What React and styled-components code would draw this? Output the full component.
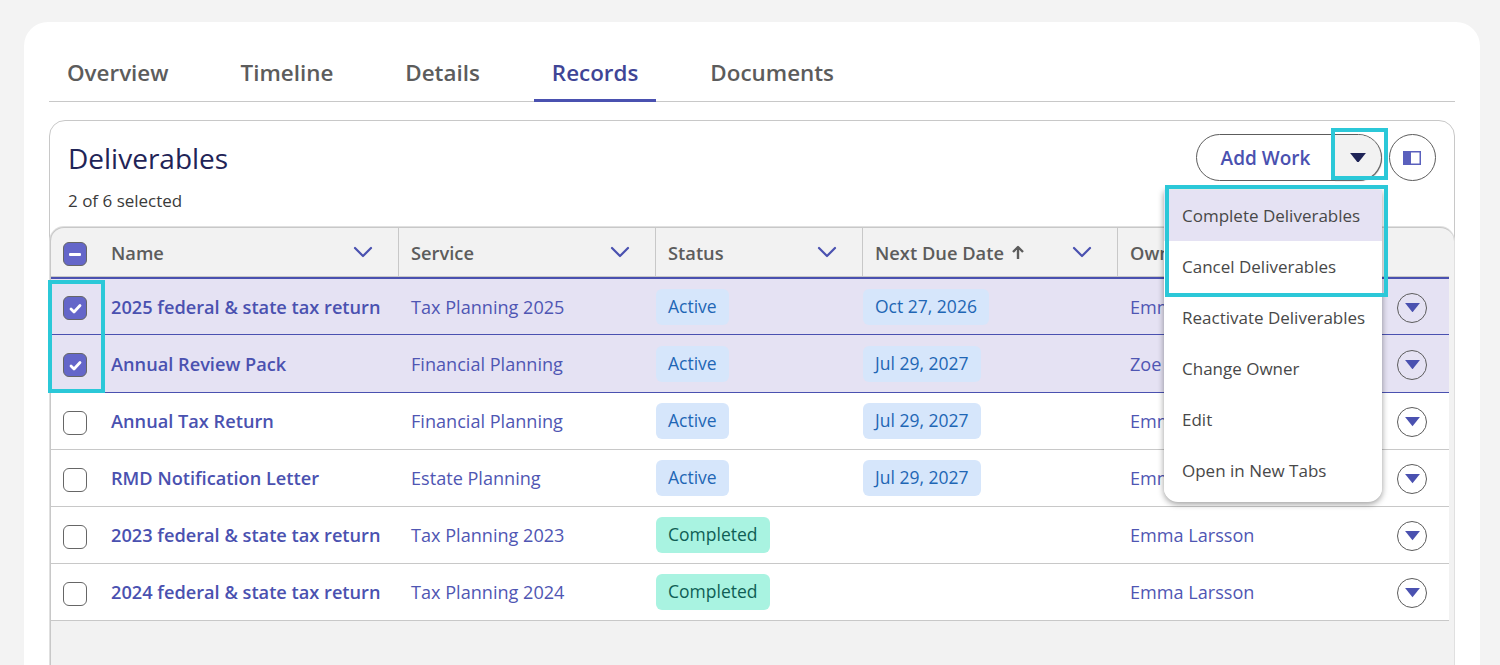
import React from 'react';
import styled, {createGlobalStyle} from 'styled-components';

const GlobalStyle = createGlobalStyle`
  html, body {
    margin: 0;
    padding: 0;
    background: #f3f3f3;
    font-family: "Open Sans", "Noto Sans", sans-serif;
  }
  * { box-sizing: border-box; }
`;

const COLUMNS = '48px 299px 257px 207px 255px 1fr 64px';

const rows = [
    {name: '2025 federal & state tax return', service: 'Tax Planning 2025', status: 'Active', date: 'Oct 27, 2026', owner: 'Emma Larsson', selected: true},
    {name: 'Annual Review Pack', service: 'Financial Planning', status: 'Active', date: 'Jul 29, 2027', owner: 'Zoe Larsson', selected: true},
    {name: 'Annual Tax Return', service: 'Financial Planning', status: 'Active', date: 'Jul 29, 2027', owner: 'Emma Larsson'},
    {name: 'RMD Notification Letter', service: 'Estate Planning', status: 'Active', date: 'Jul 29, 2027', owner: 'Emma Larsson'},
    {name: '2023 federal & state tax return', service: 'Tax Planning 2023', status: 'Completed', owner: 'Emma Larsson'},
    {name: '2024 federal & state tax return', service: 'Tax Planning 2024', status: 'Completed', owner: 'Emma Larsson'},
];

const menuItems = ['Complete Deliverables', 'Cancel Deliverables', 'Reactivate Deliverables', 'Change Owner', 'Edit', 'Open in New Tabs'];
const tabs = ['Overview', 'Timeline', 'Details', 'Records', 'Documents'];

const Chevron = () => (
    <svg width="20" height="12" viewBox="0 0 20 12" fill="none">
        <path d="M2 2l8 8 8-8" stroke="#4a51b0" strokeWidth="2.2" strokeLinecap="round" strokeLinejoin="round"/>
    </svg>
);

const Caret = ({size = 16, color = '#4a51b0'}) => (
    <svg width={size} height={size * 0.62} viewBox="0 0 16 10">
        <path d="M0 0h16L8 10z" fill={color}/>
    </svg>
);

const Check = () => (
    <svg width="13" height="11" viewBox="0 0 13 11" fill="none">
        <path d="M2 6l3 3 6-6.5" stroke="#fff" strokeWidth="2.8" strokeLinecap="round" strokeLinejoin="round"/>
    </svg>
);

const SortArrow = () => (
    <svg width="14" height="15" viewBox="0 0 14 15" fill="none">
        <path d="M7 14V2M2 7l5-5 5 5" stroke="#5c5c5c" strokeWidth="2.4" strokeLinejoin="round"/>
    </svg>
);

const App = () => {
    return (
        <Page>
            <GlobalStyle/>
            <Card>
                <TabBar>
                    {tabs.map(tab => <Tab key={tab} $active={tab === 'Records'}>{tab}</Tab>)}
                </TabBar>
                <Panel>
                    <PanelHeader>
                        <div>
                            <Title>Deliverables</Title>
                            <Selected>2 of 6 selected</Selected>
                        </div>
                        <Actions>
                            <SplitButton>
                                <AddWork>Add Work</AddWork>
                                <SplitCaret><Caret size={16} color="#1f2457"/></SplitCaret>
                                <Menu>
                                    {menuItems.map((item, i) => <MenuItem key={item} $hover={i === 0}>{item}</MenuItem>)}
                                </Menu>
                            </SplitButton>
                            <RoundButton>
                                <PanelIcon width="18" height="14" viewBox="0 0 18 14">
                                    <rect x="0.75" y="0.75" width="16.5" height="12.5" fill="none" stroke="#5a60bd" strokeWidth="1.5"/>
                                    <rect x="1" y="1" width="7" height="12" fill="#5a60bd"/>
                                </PanelIcon>
                            </RoundButton>
                        </Actions>
                    </PanelHeader>
                    <Table>
                        <HeaderRow>
                            <CheckCell><Box $checked><Dash/></Box></CheckCell>
                            <HeaderCell $first>Name<Chevron/></HeaderCell>
                            <HeaderCell>Service<Chevron/></HeaderCell>
                            <HeaderCell>Status<Chevron/></HeaderCell>
                            <HeaderCell>
                                <SortLabel>Next Due Date <SortArrow/></SortLabel>
                                <Chevron/>
                            </HeaderCell>
                            <HeaderCell>Owner</HeaderCell>
                            <div/>
                        </HeaderRow>
                        {rows.map(row => (
                            <Row key={row.name} $selected={row.selected}>
                                <CheckCell>
                                    <Box $checked={row.selected}>{row.selected && <Check/>}</Box>
                                </CheckCell>
                                <NameLink>{row.name}</NameLink>
                                <TextLink>{row.service}</TextLink>
                                <PillCell>
                                    <Pill $done={row.status === 'Completed'}>{row.status}</Pill>
                                </PillCell>
                                <PillCell>
                                    {row.date && <Pill>{row.date}</Pill>}
                                </PillCell>
                                <TextLink>{row.owner}</TextLink>
                                <ActionCell>
                                    <RowAction><Caret size={15}/></RowAction>
                                </ActionCell>
                            </Row>
                        ))}
                    </Table>
                </Panel>
            </Card>
            <Highlight $x={1331} $y={128} $w={57} $h={52}/>
            <Highlight $x={1165} $y={185} $w={223} $h={112}/>
            <Highlight $x={48} $y={280} $w={57} $h={113}/>
        </Page>
    );
};

const Page = styled.div`
  position: relative;
  height: 665px;
  overflow: hidden;
  padding: 22px 20px 0 24px;
`;

const Card = styled.div`
  background: #fff;
  border-radius: 24px 24px 0 0;
  height: 700px;
  padding: 0 25px;
`;

const TabBar = styled.div`
  display: flex;
  gap: 36px;
  height: 80px;
  border-bottom: 1px solid #c8c8c8;
  align-items: flex-end;
`;

const Tab = styled.div`
  padding: 0 18px;
  height: 47px;
  line-height: 36px;
  font-size: 22.4px;
  font-weight: 600;
  color: ${p => p.$active ? '#3f4596' : '#5c5c5c'};
  border-bottom: 3px solid ${p => p.$active ? '#4a51b0' : 'transparent'};
  margin-bottom: -1px;
`;

const Panel = styled.div`
  margin-top: 18px;
  border: 1px solid #c8c8c8;
  border-radius: 16px 16px 0 0;
  height: 600px;
  display: flex;
  flex-direction: column;
`;

const PanelHeader = styled.div`
  display: flex;
  justify-content: space-between;
  height: 106px;
  padding: 13px 18px 0 18px;
`;

const Title = styled.div`
  font-size: 28px;
  line-height: 48px;
  color: #1f2457;
`;

const Selected = styled.div`
  font-size: 17px;
  line-height: 24px;
  margin-top: 7px;
  color: #3a3a3a;
`;

const Actions = styled.div`
  display: flex;
  gap: 7px;
  height: 47px;
`;

const SplitButton = styled.div`
  position: relative;
  display: flex;
  width: 186px;
  height: 47px;
  border: 1px solid #5c5c5c;
  border-radius: 24px;
  background: #fff;
`;

const AddWork = styled.div`
  flex: 1;
  text-align: center;
  font-size: 19px;
  font-weight: 600;
  line-height: 47px;
  color: #4a51b0;
`;

const SplitCaret = styled.div`
  width: 47px;
  display: flex;
  align-items: center;
  justify-content: center;
  background: #f2f2f2;
  border-radius: 0 23px 23px 0;
  box-shadow: 1px 1px 1px #666;
`;

const RoundButton = styled.div`
  width: 47px;
  height: 47px;
  border: 1px solid #5c5c5c;
  border-radius: 50%;
  display: flex;
  align-items: center;
  justify-content: center;
`;

const PanelIcon = styled.svg`
  margin-right: 2px;
`;

const Menu = styled.div`
  position: absolute;
  z-index: 5;
  top: 55px;
  right: -1px;
  width: 218px;
  padding-bottom: 6px;
  background: #fff;
  border-radius: 0 0 14px 14px;
  box-shadow: 0 2px 6px rgba(0, 0, 0, 0.4);
  overflow: hidden;
`;

const MenuItem = styled.div`
  height: 51px;
  line-height: 51px;
  padding-left: 18px;
  font-size: 17px;
  color: #484848;
  white-space: nowrap;
  background: ${p => p.$hover ? '#e5e2f3' : '#fff'};
`;

const Table = styled.div`
  flex: 1;
  border-top: 1px solid #c8c8c8;
  border-left: 1px solid #c8c8c8;
  border-radius: 14px 14px 0 0;
  background: #f2f2f2;
  padding-right: 5px;
  box-shadow: 0 0 0 1px #e0e0e0;
`;

const HeaderRow = styled.div`
  display: grid;
  grid-template-columns: ${COLUMNS};
  height: 51px;
  border-bottom: 2px solid #4a51b0;
  box-shadow: inset 0 -1px 0 #c8c8c8;
  border-radius: 14px 0 0 0;
  align-items: stretch;
`;

const HeaderCell = styled.div`
  display: flex;
  align-items: center;
  justify-content: space-between;
  padding: 0 25px 0 12px;
  margin-bottom: 1px;
  font-size: 18.3px;
  font-weight: 600;
  color: #5c5c5c;
  border-left: ${p => p.$first ? 'none' : '1px solid #c8c8c8'};
  white-space: nowrap;
  overflow: hidden;
`;

const SortLabel = styled.span`
  display: flex;
  align-items: center;
  gap: 7px;
`;

const Row = styled.div`
  display: grid;
  grid-template-columns: ${COLUMNS};
  height: 57px;
  align-items: center;
  background: ${p => p.$selected ? '#e5e2f3' : '#fff'};
  border-bottom: 1px solid ${p => p.$selected ? '#4a51b0' : '#c8c8c8'};

  &:nth-child(2) { height: 56px; }
  &:nth-child(3) { height: 58px; }
`;

const CheckCell = styled.div`
  display: flex;
  align-items: center;
  justify-content: center;
  padding-top: 3px;
`;

const Box = styled.div`
  width: 24px;
  height: 24px;
  border: 1px solid #666;
  border-radius: 6px;
  background: ${p => p.$checked ? '#6466c9' : '#fff'};
  display: flex;
  align-items: center;
  justify-content: center;
`;

const Dash = styled.div`
  width: 12px;
  height: 3px;
  background: #fff;
  border-radius: 1px;
`;

const NameLink = styled.div`
  padding-left: 12px;
  font-size: 18.2px;
  font-weight: 600;
  color: #4a51b0;
  white-space: nowrap;
`;

const TextLink = styled.div`
  padding-left: 13px;
  font-size: 18.1px;
  color: #4f56b3;
  white-space: nowrap;
`;

const PillCell = styled.div`
  padding-left: 1px;
`;

const Pill = styled.span`
  display: inline-block;
  height: 36px;
  line-height: 35px;
  padding: 0 12.5px 0 12px;
  border-radius: 6px;
  font-size: 17.5px;
  background: ${p => p.$done ? '#a9f3e1' : '#d6e6fb'};
  color: ${p => p.$done ? '#0f5e55' : '#1f66b5'};
`;

const ActionCell = styled.div`
  display: flex;
  justify-content: center;
  padding: 2px 10px 0 0;
`;

const RowAction = styled.div`
  width: 30px;
  height: 30px;
  border: 1px solid #5c5c5c;
  border-radius: 50%;
  display: flex;
  align-items: center;
  justify-content: center;
`;

const Highlight = styled.div`
  position: absolute;
  z-index: 10;
  left: ${p => p.$x}px;
  top: ${p => p.$y}px;
  width: ${p => p.$w}px;
  height: ${p => p.$h}px;
  border: 4px solid #2bc8d8;
  pointer-events: none;
`;

export default App;
